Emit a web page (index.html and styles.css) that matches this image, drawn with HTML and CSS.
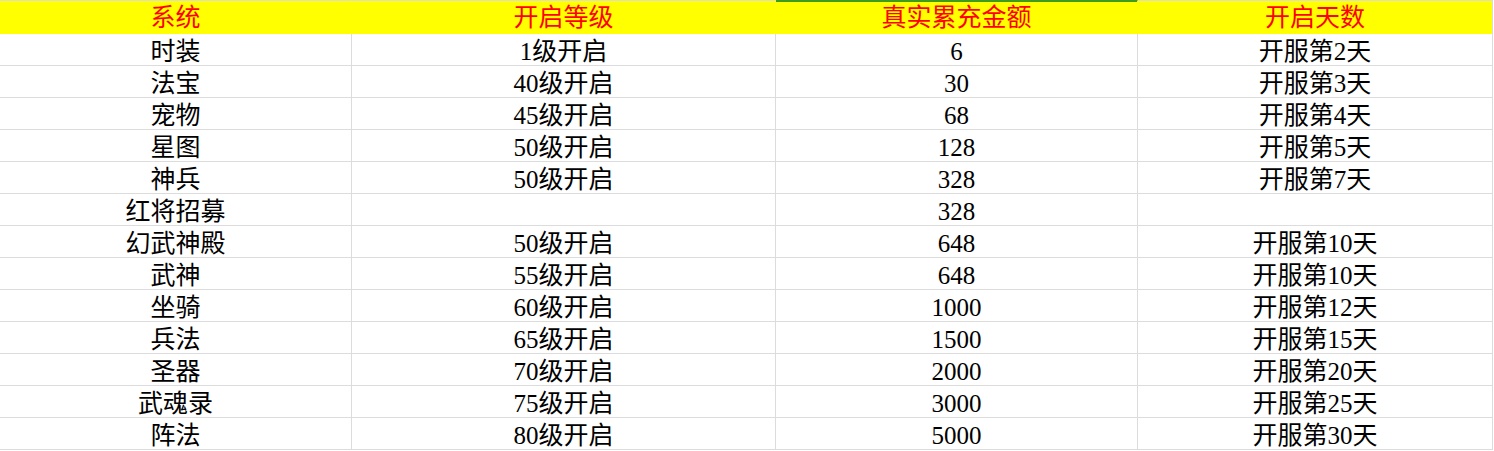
FILE: index.html
```html
<!DOCTYPE html>
<html lang="zh-CN">
<head>
<meta charset="utf-8">
<title>系统开启表</title>
<link rel="stylesheet" href="styles.css">
</head>
<body>
<table class="sheet">
  <colgroup>
    <col class="c1"><col class="c2"><col class="c3"><col class="c4">
  </colgroup>
  <thead>
    <tr class="head">
      <th>系统</th>
      <th>开启等级</th>
      <th class="selected">真实累充金额</th>
      <th class="last">开启天数</th>
    </tr>
  </thead>
  <tbody>
    <tr><td>时装</td><td>1级开启</td><td>6</td><td>开服第2天</td></tr>
    <tr><td>法宝</td><td>40级开启</td><td>30</td><td>开服第3天</td></tr>
    <tr><td>宠物</td><td>45级开启</td><td>68</td><td>开服第4天</td></tr>
    <tr><td>星图</td><td>50级开启</td><td>128</td><td>开服第5天</td></tr>
    <tr><td>神兵</td><td>50级开启</td><td>328</td><td>开服第7天</td></tr>
    <tr><td>红将招募</td><td></td><td>328</td><td></td></tr>
    <tr><td>幻武神殿</td><td>50级开启</td><td>648</td><td>开服第10天</td></tr>
    <tr><td>武神</td><td>55级开启</td><td>648</td><td>开服第10天</td></tr>
    <tr><td>坐骑</td><td>60级开启</td><td>1000</td><td>开服第12天</td></tr>
    <tr><td>兵法</td><td>65级开启</td><td>1500</td><td>开服第15天</td></tr>
    <tr><td>圣器</td><td>70级开启</td><td>2000</td><td>开服第20天</td></tr>
    <tr><td>武魂录</td><td>75级开启</td><td>3000</td><td>开服第25天</td></tr>
    <tr><td>阵法</td><td>80级开启</td><td>5000</td><td>开服第30天</td></tr>
  </tbody>
</table>
</body>
</html>
```
FILE: styles.css
```css
html, body {
  margin: 0;
  padding: 0;
  background: #ffffff;
}

.sheet {
  border-collapse: separate;
  border-spacing: 0;
  table-layout: fixed;
  width: 1493px;
  font-family: "Liberation Serif", "Noto Sans CJK SC", serif;
  font-size: 25px;
  color: #000000;
}

.c1 { width: 352px; }
.c2 { width: 424px; }
.c3 { width: 362px; }
.c4 { width: 355px; }

.sheet th,
.sheet td {
  padding: 0;
  text-align: center;
  white-space: nowrap;
  overflow: hidden;
}

.head th {
  height: 32px;
  background: #ffff00;
  color: #ff0000;
  font-weight: normal;
  border-top: 1px solid #dcdcdc;
  border-right: 1px solid #ffff00;
  vertical-align: middle;
  padding-top: 1px;
  line-height: 32px;
}

.head th.selected {
  border-top-color: #3f9b1f;
  box-shadow: inset 0 1px 0 #3f9b1f;
}

.head th.last {
  border-right-color: #dcdcdc;
}

.sheet td {
  border-right: 1px solid #dcdcdc;
  border-bottom: 1px solid #dcdcdc;
  height: 27px;
  line-height: 27px;
  padding-top: 4px;
  vertical-align: middle;
}
```
